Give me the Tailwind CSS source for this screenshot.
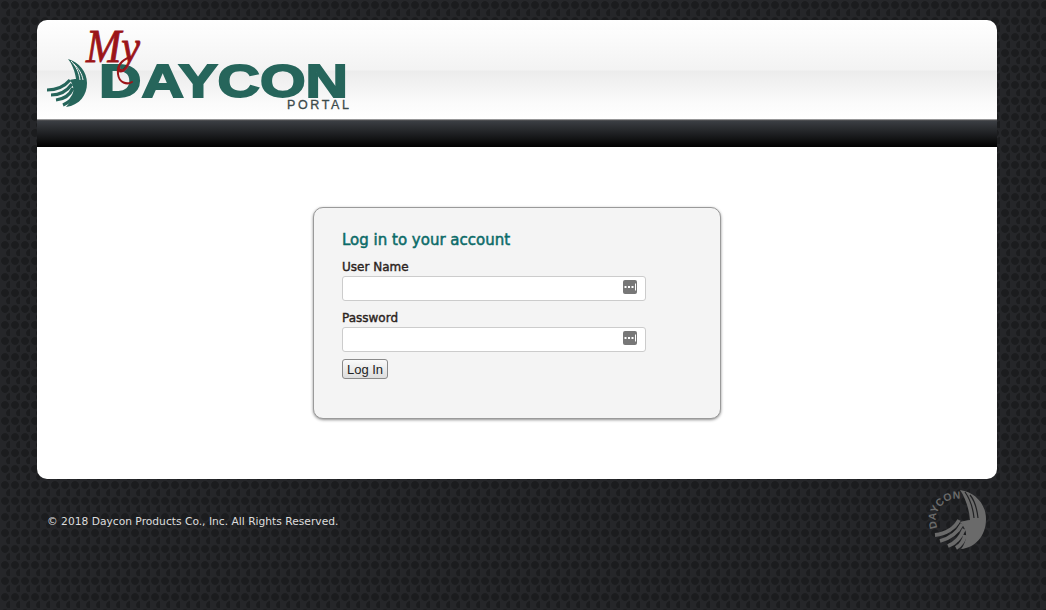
<!DOCTYPE html>
<html lang="en">
<head>
  <meta charset="UTF-8" />
  <title>MyDaycon Portal</title>
  <script src="https://cdn.jsdelivr.net/npm/@tailwindcss/browser@4"></script>
</head>
<body class="h-[610px] overflow-hidden bg-[#252629] bg-[radial-gradient(circle_at_5px_5px,#1b1c1e_3.5px,transparent_4.3px),radial-gradient(circle_at_10px_13px,#1b1c1e_3.5px,transparent_4.3px)] bg-[length:10px_16px] font-['DejaVu_Sans',sans-serif]">

  <div class="ml-[37px] w-[960px] pt-5">
    <!-- Header with logo -->
    <header class="h-[99px] rounded-t-[10px] bg-[linear-gradient(to_bottom,#ffffff_0%,#f3f3f3_50%,#ececec_52%,#fbfbfb_85%,#ffffff_100%)]">
      <svg class="block" width="320" height="99" viewBox="37 20 320 99">
        <!-- wing -->
        <path fill="#26655b" d="M68 59C79 62 87 72 87 83C87 95 80 105 66 107C72 101 77 90 70 80C72 79 75 79 76 79C75 71 72 64 68 59Z" />
        <g fill="none" stroke="#f1f1f1" stroke-width="1">
          <path d="M71 61C76 66 79 72 80 80" />
          <path d="M74 64C79 69 82 74 83 80" />
        </g>
        <g fill="none" stroke="#26655b" stroke-width="3.200">
          <path d="M70 80C64 87 56 90 47 90" />
          <path d="M72 84C67 91 60 95 51 95" />
          <path d="M73 88C70 95 64 99 56 100" />
          <path d="M75 92C73 99 68 103 63 105" />
        </g>
        <!-- wordmark -->
        <text x="99" y="97" textLength="249" lengthAdjust="spacingAndGlyphs" fill="#26655b" stroke="#26655b" stroke-width="1.800" font-family="Liberation Sans" font-weight="700" font-size="46">DAYCON</text>
        <text x="287" y="109" textLength="62" fill="#3c4a4a" stroke="#3c4a4a" stroke-width="0.3" font-family="Liberation Sans" font-size="12.500">PORTAL</text>
        <!-- signature -->
        <text x="86" y="62" textLength="54" lengthAdjust="spacingAndGlyphs" fill="#9b1418" stroke="#9b1418" stroke-width="0.8" font-family="Liberation Serif" font-style="italic" font-size="46">My</text>
        <path fill="none" stroke="#9b1418" stroke-width="2" stroke-linecap="round" d="M130 57C122 60 117 66 118 74C119 83 127 85 132 82" />
      </svg>
    </header>
    <div class="h-0.5 bg-[linear-gradient(to_bottom,#bdbdbd,#24262a)]"></div>
    <nav class="h-[26px] bg-[linear-gradient(to_bottom,#3b3e43,#000000)]"></nav>

    <!-- Content -->
    <main class="h-[332px] rounded-b-[10px] bg-white pt-[60px]">
      <section class="ml-[276px] h-[212px] w-[408px] rounded-[10px] border border-[#9a9a9a] bg-[#f4f4f4] pl-7 pt-[22px] shadow-[0_1px_3px_rgba(0,0,0,0.45)]">
        <h2 class="text-[15px] leading-5 text-[#0b6b68] [-webkit-text-stroke:0.5px_#0b6b68]">Log in to your account</h2>
        <form class="mt-[9px]">
          <label class="block h-[17px] text-xs leading-4 text-[#2b2320] [-webkit-text-stroke:0.4px_#2b2320]">User Name</label>
          <div class="relative h-[25px] w-[304px] rounded-[3px] border border-[#cccccc] bg-white">
            <svg class="absolute left-[280px] top-[3px]" width="14" height="14" viewBox="0 0 14 14">
              <rect width="14" height="14" rx="2" fill="#777777" />
              <path fill="#ffffff" d="M1.500 6h2v2h-2zM5 6h2v2h-2zM8.500 6h2v2h-2zM12 3.500h1v7h-1z" />
            </svg>
          </div>
          <label class="mt-[9px] block h-[17px] text-xs leading-4 text-[#2b2320] [-webkit-text-stroke:0.4px_#2b2320]">Password</label>
          <div class="relative h-[25px] w-[304px] rounded-[3px] border border-[#cccccc] bg-white">
            <svg class="absolute left-[280px] top-[3px]" width="14" height="14" viewBox="0 0 14 14">
              <rect width="14" height="14" rx="2" fill="#777777" />
              <path fill="#ffffff" d="M1.500 6h2v2h-2zM5 6h2v2h-2zM8.500 6h2v2h-2zM12 3.500h1v7h-1z" />
            </svg>
          </div>
          <button type="button" class="mt-[7px] block h-5 w-[46px] rounded-[3px] border border-[#8a8a8a] bg-[linear-gradient(to_bottom,#fafafa,#dddddd)] font-['Liberation_Sans',sans-serif] text-[13px] leading-none text-[#222222]">Log In</button>
        </form>
      </section>
    </main>

    <!-- Footer -->
    <footer class="flex items-start justify-between pl-2.5 pr-2.5 pt-2.5">
      <p class="mt-[26px] text-[10.7px] leading-[14px] text-[#dddddd]">© 2018 Daycon Products Co., Inc. All Rights Reserved.</p>
      <svg class="block" width="60" height="62" viewBox="0 0 60 62">
        <defs><path id="footer-arc" d="M10.500 38.900A21 21 0 0 1 37 11" /></defs>
        <path fill="#6a6a6a" d="M33 1C48 3 59 15 59 30C59 47 48 59 34 60C40 52 42 42 33 33C37 32 40 31 43 31C42 19 38 8 33 1Z" />
        <g fill="none" stroke="#202123" stroke-width="1.200">
          <path d="M38 3C43 10 46 19 47 29" />
          <path d="M43 6C48 12 50 20 51 29" />
        </g>
        <g fill="none" stroke="#6a6a6a" stroke-width="3.800">
          <path d="M32 31C28 39 19 45 8 46" />
          <path d="M35 35C31 43 24 49 13 52" />
          <path d="M37 40C34 48 29 54 21 57" />
          <path d="M38 46C37 52 34 56 29 59" />
        </g>
        <text fill="#6a6a6a" font-family="Liberation Sans" font-weight="700" font-size="10.500"><textPath href="#footer-arc">DAYCON</textPath></text>
      </svg>
    </footer>
  </div>
</body>
</html>
